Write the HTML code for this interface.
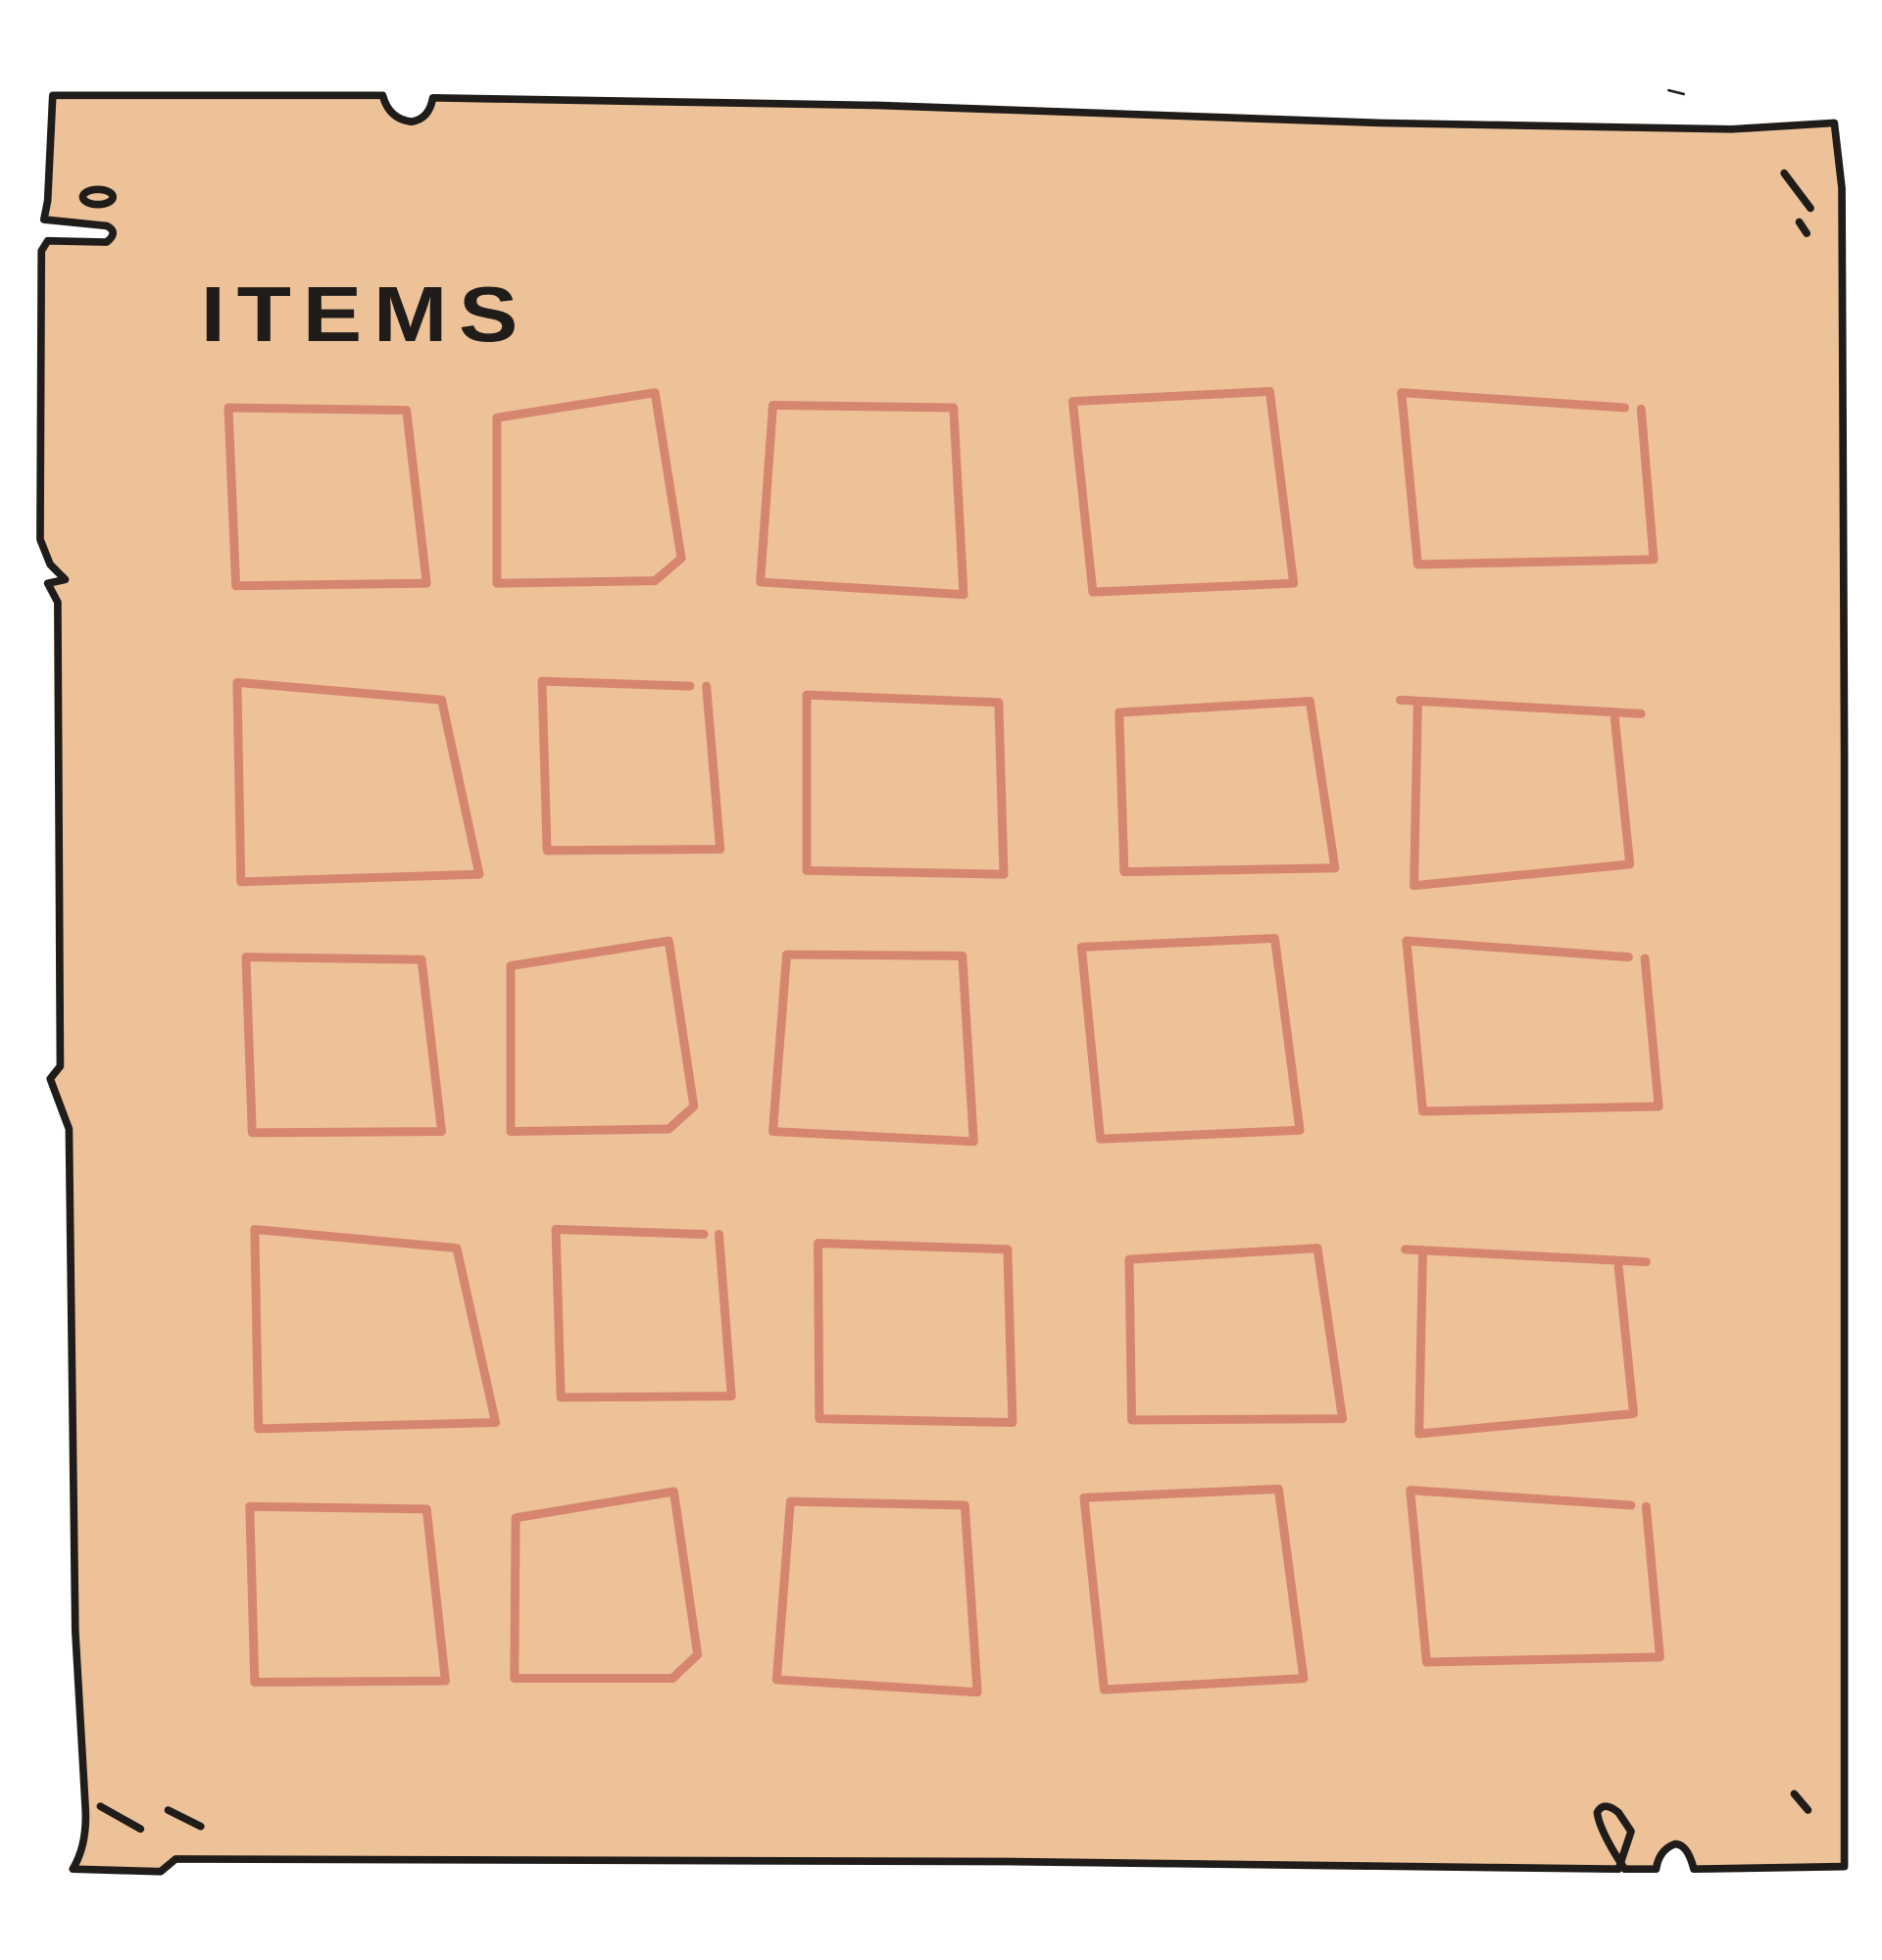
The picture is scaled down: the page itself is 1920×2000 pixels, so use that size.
<!DOCTYPE html>
<html><head><meta charset="utf-8"><style>
html,body{margin:0;padding:0;background:#fff;width:1920px;height:2000px;overflow:hidden}
svg{display:block}
</style></head><body>
<svg width="1920" height="2000" viewBox="0 0 1500 1562.5" preserveAspectRatio="none" xmlns="http://www.w3.org/2000/svg">
<path d="M42,76 L305,76 Q310,95 328,97 Q342,95 345,78 L700,84 L1100,98 L1380,103 L1462,98 L1468,150 L1470,600 L1470,1200 L1470,1488 L1350,1490 Q1345,1470 1335,1470 Q1322,1475 1320,1490 L1295,1490 Q1275,1460 1273,1445 Q1278,1435 1290,1445 L1300,1460 L1290,1490 L800,1484 L140,1482 L128,1492 L58,1490 Q70,1470 68,1440 L60,1300 L55,900 L40,860 L48,850 L46,480 L38,465 L52,462 L40,450 L32,430 L33,200 L38,192 L85,193 Q95,185 85,180 L35,175 L38,160 Z" fill="#EDC299" stroke="#1f1c19" stroke-width="6" stroke-linejoin="round"/>
<g fill="none" stroke="#1f1c19" stroke-width="6" stroke-linecap="round">
<ellipse cx="78" cy="157" rx="12" ry="6"/>
<path d="M1422,138 L1443,166 M1434,177 L1440,186 M1430,1430 L1441,1443 M80,1440 L112,1458 M134,1443 L160,1456"/>
<path d="M1330,72 L1342,75" stroke-width="2"/>
</g>
<text x="160" y="272" font-family="Liberation Sans, sans-serif" font-weight="bold" font-size="62" letter-spacing="8" fill="#1f1c19" textLength="262" lengthAdjust="spacingAndGlyphs">ITEMS</text>
<g fill="none" stroke="#D6866F" stroke-width="7" stroke-linejoin="round" stroke-linecap="round">
<polygon points="182,325 324,327 340,465 188,467"/>
<polygon points="396,333 522,313 543,445 522,463 396,465"/>
<polygon points="616,323 760,325 768,474 606,464"/>
<polygon points="855,320 1012,312 1031,465 871,472"/>
<path d="M1295,325 L1117,313 L1130,450 L1318,446 L1308,326"/>
<polygon points="189,544 352,558 382,697 192,703"/>
<path d="M550,547 L432,543 L436,678 L574,677 L563,547"/>
<polygon points="643,554 796,560 800,697 643,694"/>
<polygon points="892,568 1044,559 1064,692 896,695"/>
<path d="M1116,558 L1308,569 M1287,573 L1299,689 L1127,706 L1130,560"/>
<polygon points="196,763 336,765 352,902 201,903"/>
<polygon points="407,770 533,750 553,882 533,900 407,902"/>
<polygon points="627,761 767,762 776,910 616,902"/>
<polygon points="862,755 1016,748 1036,901 877,908"/>
<path d="M1298,763 L1121,750 L1134,886 L1322,882 L1311,764"/>
<polygon points="203,980 364,995 395,1134 206,1139"/>
<path d="M561,984 L443,980 L447,1114 L583,1113 L573,984"/>
<polygon points="652,991 803,996 807,1134 653,1131"/>
<polygon points="900,1004 1050,995 1070,1131 902,1132"/>
<path d="M1120,996 L1312,1006 M1290,1010 L1302,1127 L1131,1143 L1134,997"/>
<polygon points="199,1201 340,1203 355,1340 203,1341"/>
<polygon points="411,1210 537,1189 556,1319 536,1338 410,1338"/>
<polygon points="630,1197 769,1200 779,1349 619,1339"/>
<polygon points="864,1194 1019,1187 1039,1338 880,1347"/>
<path d="M1300,1200 L1124,1188 L1137,1325 L1323,1321 L1312,1201"/>
</g>
</svg>
</body></html>
